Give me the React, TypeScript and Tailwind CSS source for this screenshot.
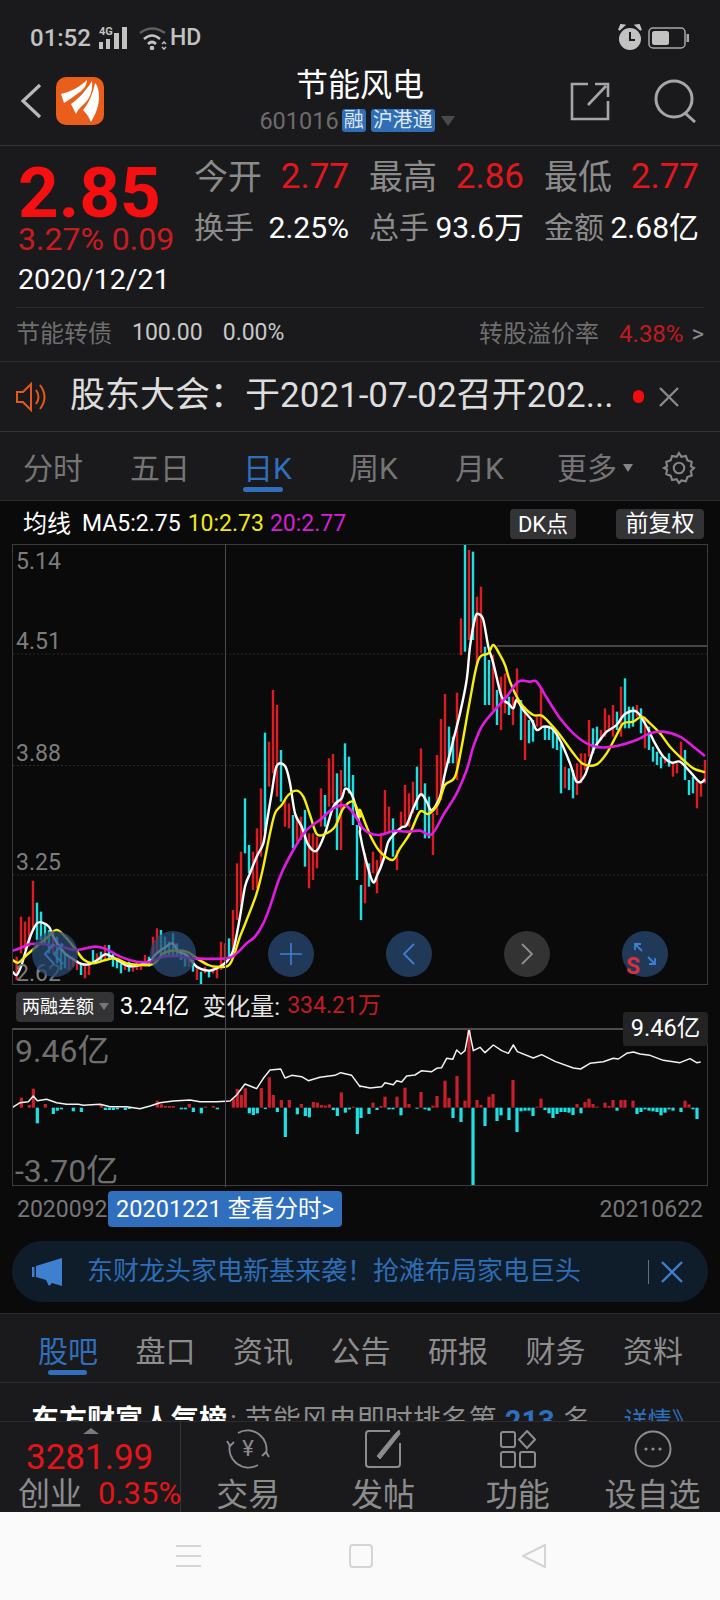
import type { ReactNode } from 'react';

const FONT = 'font-["Roboto","Noto_Sans_CJK_SC",sans-serif]';

// traced chart data, in 3x crop coordinates of the left and right half of the chart
const barsLeft =
  'r50 1250 1320|r63 1130 1240|r75 1145 1230|r87 1130 1220|r99 1022 1170|c111 1088 1200|c123 1115 1200|c135 1150 1210|c147 1170 1240|r159 1180 1240|c171 1190 1270|c183 1210 1290|c195 1240 1285|r207 1250 1290|r219 1250 1280|r231 1260 1290|c243 1270 1305|r255 1270 1315|r267 1270 1305|c279 1230 1270|r291 1240 1265|c303 1235 1265|r315 1215 1260|c327 1215 1260|c339 1240 1280|c351 1255 1285|c363 1270 1300|r375 1265 1290|c387 1265 1295|r399 1270 1295|r411 1265 1290|r423 1265 1290|r435 1245 1275|c447 1250 1280|r459 1190 1250|r471 1165 1240|c483 1170 1245|c495 1190 1250|c507 1205 1250|c519 1180 1250|c531 1210 1250|c543 1230 1260|c555 1240 1280|r567 1250 1280|c579 1260 1295|r591 1285 1320|c603 1295 1335|r615 1280 1300|c627 1290 1312|r639 1280 1300|r651 1280 1315|r663 1205 1290|r675 1210 1270|c687 1195 1260|r699 1110 1250|r711 970 1140|r723 935 1100|c735 775 940|c747 915 1000|r759 935 1050|r771 865 1045|r783 745 950|c795 578 880|r807 605 740|r819 450 700|r831 495 770|c843 630 785|r855 780 860|r867 790 865|c879 825 925|r891 830 905|r903 830 900|c915 810 980|r927 880 1045|r939 880 1020|r951 890 985|r963 745 860|c975 765 860|r987 655 800|r999 642 790|c1011 700 930|r1023 690 930|c1035 610 740|c1047 650 760|c1059 705 855|c1071 855 1020';
const barsRight =
  'c3 1035 1140|r15 940 1090|c27 970 1040|r39 935 1000|r51 960 1060|r63 880 980|r75 750 880|r87 800 880|c99 835 950|r111 930 990|r123 815 860|r135 735 860|r147 760 860|r159 725 820|c171 680 810|r183 625 770|c195 730 895|c207 770 895|r219 820 945|r231 645 825|r243 537 780|r255 462 700|c267 560 670|c279 590 670|r291 458 720|r303 235 345|c315 12 335|r327 30 300|c339 35 300|r351 170 370|r363 140 340|c375 320 495|c387 360 495|r399 345 510|c411 450 555|r423 410 570|r435 400 520|c447 470 525|r459 470 555|r471 385 490|c483 480 600|r495 500 660|c507 540 610|c519 540 605|r531 530 560|r543 440 560|c555 560 600|c567 560 600|c579 570 625|c591 580 630|c603 610 760|r615 680 745|c627 685 750|c639 690 775|r651 670 765|r663 640 730|r675 640 690|r687 540 650|c699 565 640|c711 560 625|r723 570 600|r735 505 590|r747 525 575|r759 495 590|c771 515 570|r783 440 590|c795 415 565|c807 500 565|c819 500 560|r831 495 530|c843 505 580|r855 530 625|c867 560 630|c879 620 665|c891 635 675|c903 650 685|r915 650 670|c927 640 680|r939 670 710|r951 670 700|r963 605 660|c975 630 720|c987 720 765|c999 710 760|r1011 725 805|r1023 730 770|r1035 660 730';

const whiteLine = [
  '38,1295 50,1305 63,1280 75,1240 87,1200 99,1170 111,1150 125,1147 147,1160 160,1190 175,1215 195,1240 220,1258 245,1272 270,1272 295,1258 315,1243 335,1250 360,1265 385,1278 420,1275 450,1262 470,1240 495,1222 518,1210 535,1235 560,1245 590,1280 625,1292 650,1285 680,1265 700,1230 720,1130 735,1040 750,1000 770,950 790,910 800,850 815,760 830,678 855,678 870,730 885,820 905,860 925,915 950,932 975,880 1000,800 1025,775 1037,745 1060,775 1080,860',
  '0,880 15,950 38,1025 52,1005 70,960 85,905 105,880 125,862 140,855 160,805 182,763 200,785 215,810 240,770 255,700 280,600 300,520 320,420 330,320 345,235 355,222 370,240 385,320 400,370 425,470 445,490 460,505 470,480 490,510 515,540 530,570 550,560 575,565 600,600 630,670 650,725 675,705 700,630 720,600 740,575 770,555 795,522 830,515 860,560 885,610 910,650 935,668 960,665 990,695 1020,727 1035,718',
];
const yellowLine = [
  '38,1260 55,1268 80,1245 115,1215 145,1190 170,1170 195,1190 225,1225 250,1258 280,1270 310,1262 345,1255 380,1270 420,1275 460,1272 490,1240 520,1232 560,1235 590,1255 625,1275 650,1280 690,1272 720,1190 740,1140 770,1060 790,980 810,880 825,820 845,795 865,765 890,752 910,770 930,825 950,882 975,882 1005,860 1030,805 1060,785 1080,830',
  '0,810 20,860 35,895 60,935 98,960 120,925 150,880 180,815 205,822 235,790 255,735 285,710 305,620 330,480 355,360 385,340 400,315 420,345 435,375 450,425 470,470 490,500 520,525 545,527 570,550 600,585 640,640 670,672 710,673 740,640 770,585 790,550 820,545 845,530 870,550 900,580 930,620 970,660 1000,685 1035,697',
];
const magentaLine = [
  '38,1232 60,1225 90,1212 120,1212 150,1215 190,1222 230,1230 285,1220 320,1228 360,1250 410,1265 450,1265 490,1250 530,1248 580,1255 680,1255 710,1240 740,1210 765,1190 790,1150 810,1100 840,1010 880,930 920,870 960,840 1000,805 1040,798 1080,850',
  '0,855 25,878 60,885 100,873 140,875 180,872 215,883 250,825 290,760 320,690 340,620 365,560 400,515 440,470 475,425 510,425 530,425 555,465 600,535 640,580 680,610 720,622 770,618 830,600 870,580 910,575 960,590 1000,620 1035,648',
];

const flowLeft =
  'r64 323|r88 345|r100 296|c112 400|r136 342|c160 372|c172 362|c184 358|c220 364|c244 366|r304 343|c316 360|c328 360|c340 360|c352 358|c376 360|c388 357|r472 332|r484 343|r496 348|r508 348|r520 348|c544 358|c556 358|r568 342|c580 366|c604 370|r616 350|r640 348|c652 358|r700 325|r712 297|r724 315|r736 295|c748 370|c760 375|c772 370|r784 294|c796 357|r808 262|r820 315|c832 366|r844 330|c856 441|r868 330|c892 373|r904 342|c916 378|c928 382|r940 336|r952 338|r964 345|r976 347|r988 343|c1000 360|c1012 378|r1024 307|c1036 368|c1048 358|r1060 350|c1072 432';
const flowRight =
  'c3 384|c27 372|r39 338|c51 360|r63 348|r75 320|c87 358|c99 358|r111 320|c123 376|r135 293|r147 342|c171 356|r183 306|c195 358|c207 362|r219 347|r231 318|r255 272|r267 324|c279 384|r291 258|c303 396|r315 332|r327 115|c339 585|r351 330|r363 345|c375 408|r387 320|r399 312|c411 393|c423 376|c447 390|r459 270|c471 426|c483 364|c495 362|c507 362|c519 378|r531 350|r543 326|c555 360|c567 370|c579 384|c591 372|c603 366|c615 366|c627 368|c639 375|r651 342|c663 370|r675 336|r687 326|r699 342|r711 350|r735 338|r747 348|r759 330|c771 362|r783 330|r795 330|r819 332|c831 372|c843 366|c855 358|c867 362|c879 364|c891 366|c903 376|c915 368|c927 358|c939 362|c963 366|r975 332|r987 343|c999 358|c1011 387';
const flowLine = [
  '38,352 60,338 85,335 100,318 112,332 140,328 170,338 200,343 235,343 250,346 300,343 330,350 380,350 420,356 450,348 480,338 520,333 570,330 600,335 650,335 690,333 710,315 735,282 770,296 790,265 810,240 842,237 855,264 875,256 905,260 925,272 960,262 1005,256 1022,248 1055,256 1080,290',
  '0,288 30,294 65,290 75,278 100,284 110,272 125,276 140,258 165,255 185,242 215,245 230,235 245,233 260,205 278,208 290,180 303,192 315,182 327,118 340,182 360,172 375,188 400,165 425,182 445,190 460,165 472,185 520,204 545,194 585,214 640,234 662,237 690,220 730,215 760,205 775,207 800,190 820,186 840,192 870,196 910,211 960,218 990,206 1010,218 1022,216',
];

const RED = '#dc1c22';
const CYAN = '#1fdfe3';

function parseBars(src: string, offset: number) {
  return src.split('|').map((b) => {
    const [x, a, c] = b.slice(1).split(' ').map(Number);
    return { color: b[0] === 'r' ? RED : CYAN, x: offset + x / 3, a, c };
  });
}

function linePoints(parts: string[]) {
  return parts.flatMap((part, i) =>
    part.split(' ').map((p) => {
      const [x, y] = p.split(',').map(Number);
      return [(i ? 360 : 0) + x / 3, y / 3];
    }),
  );
}

// catmull-rom through the traced points, so the averages read as curves
function smoothPath(parts: string[]) {
  const pts = linePoints(parts);
  let d = `M${pts[0][0]} ${pts[0][1]}`;
  for (let i = 0; i < pts.length - 1; i++) {
    const p0 = pts[Math.max(i - 1, 0)];
    const p1 = pts[i];
    const p2 = pts[i + 1];
    const p3 = pts[Math.min(i + 2, pts.length - 1)];
    const c1x = p1[0] + (p2[0] - p0[0]) / 6;
    const c1y = p1[1] + (p2[1] - p0[1]) / 6;
    const c2x = p2[0] - (p3[0] - p1[0]) / 6;
    const c2y = p2[1] - (p3[1] - p1[1]) / 6;
    d += `C${c1x} ${c1y} ${c2x} ${c2y} ${p2[0]} ${p2[1]}`;
  }
  return d;
}

function PriceChart() {
  const bars = [...parseBars(barsLeft, 0), ...parseBars(barsRight, 360)];
  return (
    <svg className="absolute inset-0 h-full w-full" viewBox="13 5 694 439">
      <line x1="13" x2="707" y1="114" y2="114" stroke="#2b2b2b" strokeDasharray="2 2" />
      <line x1="13" x2="707" y1="225.5" y2="225.5" stroke="#2b2b2b" strokeDasharray="2 2" />
      <line x1="13" x2="707" y1="335" y2="335" stroke="#2b2b2b" strokeDasharray="2 2" />
      <line x1="497" x2="707" y1="106" y2="106" stroke="#5a5a5a" strokeWidth="1.5" />
      {bars.map((b, i) => (
        <line key={i} x1={b.x} x2={b.x} y1={b.a / 3} y2={b.c / 3} stroke={b.color} strokeWidth="2.4" />
      ))}
      <path d={smoothPath(whiteLine)} fill="none" stroke="#ffffff" strokeWidth="2.4" strokeLinejoin="round" />
      <path d={smoothPath(yellowLine)} fill="none" stroke="#f6ef0e" strokeWidth="2.4" strokeLinejoin="round" />
      <path d={smoothPath(magentaLine)} fill="none" stroke="#e11be0" strokeWidth="2.6" strokeLinejoin="round" />
    </svg>
  );
}

function FlowChart() {
  const parse = (src: string, offset: number) =>
    src.split('|').map((b) => ({ red: b[0] === 'r', x: offset + Number(b.slice(1).split(' ')[0]) / 3, y: Number(b.split(' ')[1]) / 3 }));
  const bars = [...parse(flowLeft, 0), ...parse(flowRight, 360)];
  const zero = 353 / 3;
  const line = linePoints(flowLine).map((p) => p.join(',')).join(' ');
  return (
    <svg className="absolute inset-0 h-full w-full" viewBox="13 39 694 156">
      {bars.map((b, i) => (
        <rect
          key={i}
          x={b.x - 1.6}
          y={Math.min(b.y, zero)}
          width="3.2"
          height={Math.abs(b.y - zero)}
          fill={b.red ? '#c8202a' : CYAN}
        />
      ))}
      <polyline points={line} fill="none" stroke="#f2f2f2" strokeWidth="1.5" strokeLinejoin="round" />
    </svg>
  );
}

function Stat({ label, value, red, big }: { label: string; value: string; red?: boolean; big?: boolean }) {
  return (
    <div className="flex w-[175px] items-center justify-between pr-[20px]">
      <span className={`text-[#8b8b8b] ${big ? 'text-[34px]' : 'text-[30px]'}`}>{label}</span>
      <span className={`${big ? 'text-[35px]' : 'text-[30px]'} ${red ? 'text-[#e0181e]' : 'text-white'} whitespace-nowrap`}>{value}</span>
    </div>
  );
}

function Circle({ children, gray }: { children?: ReactNode; gray?: boolean }) {
  return (
    <div className={`flex h-[46px] w-[46px] items-center justify-center rounded-full ${gray ? 'bg-[#333333]' : 'bg-[#2a4a73]/75'}`}>
      {children}
    </div>
  );
}

function NavItem({ icon, label }: { icon: ReactNode; label: string }) {
  return (
    <div className="flex w-[135px] flex-col items-center pt-[6px]">
      <div className="flex h-[42px] items-center justify-center">{icon}</div>
      <span className="mt-[8px] text-[32px] leading-[34px] text-[#8c8c8c]">{label}</span>
    </div>
  );
}

export default function App() {
  return (
    <div className={`${FONT} h-[1600px] w-[720px] overflow-hidden bg-[#1a1a1c]`}>
      {/* status bar */}
      <div className="flex h-[58px] items-center justify-between pl-[30px] pr-[30px] pt-[18px] text-[#c2c2c2]">
        <div className="flex items-center">
          <span className="text-[24px] font-medium">01:52</span>
          <svg className="ml-[8px]" width="30" height="24" viewBox="0 0 30 24" fill="#c2c2c2">
            <text x="0" y="9" fontSize="11" fontWeight="700">4G</text>
            <rect x="0" y="16" width="4" height="7" />
            <rect x="7" y="13" width="4" height="10" />
            <rect x="15" y="7" width="5" height="16" />
            <rect x="23" y="1" width="5" height="22" />
          </svg>
          <svg className="ml-[10px]" width="28" height="24" viewBox="0 0 28 24" fill="none" stroke="#c2c2c2" strokeWidth="2.6">
            <path d="M1 7 Q13 -2 26 7" stroke="#5e5e5e" />
            <path d="M5 13 Q13 6 21 13" />
            <path d="M9 18 Q13 14 17 18" />
            <circle cx="13" cy="22" r="1" fill="#c2c2c2" />
            <path d="M23 18 L25 16 L27 18 M23 21 L25 23 L27 21" strokeWidth="1.5" />
          </svg>
          <span className="ml-[3px] text-[23px] font-medium">HD</span>
        </div>
        <div className="flex items-center gap-[5px]">
          <svg width="26" height="28" viewBox="0 0 26 28" fill="#c2c2c2">
            <circle cx="13" cy="15" r="11" />
            <path d="M2 6 L7 1.5 L4 1 Z M24 6 L19 1.5 L22 1 Z" stroke="#c2c2c2" strokeWidth="2" />
            <path d="M13 8 V16 H18" fill="none" stroke="#1a1a1c" strokeWidth="2" />
          </svg>
          <svg width="42" height="22" viewBox="0 0 42 22" fill="none">
            <rect x="1" y="1" width="36" height="20" rx="4" stroke="#a8a8a8" strokeWidth="1.5" />
            <rect x="4" y="4" width="17" height="14" rx="2.5" fill="#c2c2c2" />
            <rect x="38.500" y="7" width="2.500" height="8" fill="#a8a8a8" />
          </svg>
        </div>
      </div>

      {/* header */}
      <div className="flex h-[88px] items-center border-b border-[#333335] pb-[2px]">
        <div className="flex w-[200px] items-center pl-[20px]">
          <svg width="22" height="36" viewBox="0 0 22 36" fill="none" stroke="#b8b8b8" strokeWidth="3.2">
            <path d="M20 2 L3 18 L20 34" />
          </svg>
          <svg className="ml-[14px]" width="48" height="48" viewBox="0 0 48 48">
            <rect width="48" height="48" rx="10" fill="#e85e1a" />
            <path d="M5 17 C14 15 24 10 31 3 C31 9 26 14 21 17 C16 21 12 23 8 26 Z" fill="#ffffff" />
            <path d="M15 27 C22 22 30 14 36 4 C37 12 35 20 29 26 C26 29 22 32 20 37 Z" fill="#ffffff" />
            <path d="M27 33 C33 26 37 16 39 6 C42 9 43 14 43 20 C43 30 39 38 35 45 C33 40 30 36 27 33 Z" fill="#ffffff" />
          </svg>
        </div>
        <div className="flex flex-1 flex-col items-center">
          <span className="-mt-[3px] text-[32px] leading-[38px] text-white">节能风电</span>
          <div className="mr-[6px] mt-[5px] flex items-center">
            <span className="text-[23.5px] leading-[24px] text-[#6c6c6c]">601016</span>
            <span className="ml-[3px] rounded-[3px] bg-[#2f6db5] px-[2px] text-[20px] leading-[23px] text-[#dfe8f2]">融</span>
            <span className="ml-[5px] rounded-[3px] bg-[#2f6db5] px-[2px] text-[20px] leading-[23px] text-[#dfe8f2]">沪港通</span>
            <span className="ml-[6px] h-0 w-0 border-x-[7px] border-t-[10px] border-x-transparent border-t-[#4a4a4a]" />
          </div>
        </div>
        <div className="flex w-[200px] items-center justify-end gap-[44px] pr-[24px]">
          <svg width="40" height="40" viewBox="0 0 40 40" fill="none" stroke="#a6a6a6" strokeWidth="2.6">
            <path d="M18 3 H2 V38 H38 V20" />
            <path d="M18 24 L36 5 M25 3 H38 V16" />
          </svg>
          <svg width="42" height="44" viewBox="0 0 42 44" fill="none" stroke="#a6a6a6" strokeWidth="3">
            <circle cx="20" cy="20" r="18" />
            <path d="M31 34 L41 43" />
          </svg>
        </div>
      </div>

      {/* quote */}
      <div className="h-[161px]">
        <div className="flex">
          <div className="w-[194px] pl-[18px]">
            <div className="-mb-[2px] pt-[16px] text-[71px] font-bold leading-[62px] text-[#f50f10]">2.85</div>
            <div className="whitespace-nowrap text-[32px] leading-[34px] text-[#c91c22]">3.27% 0.09</div>
            <div className="mt-[6px] text-[28.5px] leading-[36px] text-white">2020/12/21</div>
          </div>
          <div className="pt-[8px]">
            <div className="flex h-[46px] items-center">
              <Stat big label="今开" value="2.77" red />
              <Stat big label="最高" value="2.86" red />
              <Stat big label="最低" value="2.77" red />
            </div>
            <div className="mt-[4px] flex h-[46px] items-center">
              <Stat label="换手" value="2.25%" />
              <Stat label="总手" value="93.6万" />
              <Stat label="金额" value="2.68亿" />
            </div>
          </div>
        </div>
      </div>
      <div className="mx-[16px] h-px bg-[#2a2a2c]" />

      {/* convertible bond */}
      <div className="flex h-[54px] items-center justify-between border-b border-[#2c2c2e] pb-[2px] pl-[16px] pr-[16px] text-[24px] text-[#6f6f6f]">
        <div className="flex items-center">
          <span>节能转债</span>
          <span className="ml-[20px] text-[23px] text-[#c8c8c8]">100.00</span>
          <span className="ml-[20px] text-[23px] text-[#c8c8c8]">0.00%</span>
        </div>
        <div className="flex items-center">
          <span>转股溢价率</span>
          <span className="ml-[20px] text-[24px] text-[#c01a20]">4.38%</span>
          <span className="ml-[8px] text-[#8a8a8a]">&gt;</span>
        </div>
      </div>

      {/* notice */}
      <div className="flex h-[70px] items-center border-b border-[#333335] pl-[16px]">
        <svg width="34" height="30" viewBox="0 0 34 30" fill="none" stroke="#e05a1c" strokeWidth="2">
          <path d="M1 10 H7 L15 2 V28 L7 20 H1 Z" />
          <path d="M20 8 Q25 15 20 22" />
          <path d="M24 3 Q33 15 24 27" />
        </svg>
        <span className="ml-[20px] whitespace-nowrap text-[35px] text-[#dedede]">股东大会：于2021-07-02召开202...</span>
        <span className="ml-[20px] h-[13px] w-[11px] rounded-full bg-[#f20c10]" />
        <svg className="ml-[15px]" width="20" height="20" viewBox="0 0 20 20" stroke="#8a8a8a" strokeWidth="2.4">
          <path d="M1 1 L19 19 M19 1 L1 19" />
        </svg>
      </div>

      {/* period tabs */}
      <div className="flex h-[69px] items-center border-b border-[#2c2c2e] pt-[4px] text-[30px] text-[#757575]">
        <span className="ml-[23px] w-[107px]">分时</span>
        <span className="w-[113px]">五日</span>
        <div className="relative w-[106px] text-[#2f6fbe]">
          日K
          <span className="absolute left-0 top-[41px] h-[5px] w-[40px] rounded-full bg-[#2f6fbe]" />
        </div>
        <span className="w-[106px]">周K</span>
        <span className="w-[102px]">月K</span>
        <span>更多</span>
        <span className="ml-[6px] h-0 w-0 border-x-[5px] border-t-[8px] border-x-transparent border-t-[#858585]" />
        <svg className="ml-[28px]" width="36" height="38" viewBox="0 0 24 24" fill="none" stroke="#858585" strokeWidth="1.4">
          <path d="M12 2 l1.6 2.6 3-.6 1 2.9 2.9 1-.6 3 2.1 1.1-2.1 2 .6 3-2.9 1-1 2.9-3-.6L12 22l-1.600-2.600-3 .6-1-2.900-2.900-1 .6-3L2 12l2.100-1.100-.6-3 2.900-1 1-2.900 3 .6z" />
          <circle cx="12" cy="12" r="3.5" />
        </svg>
      </div>

      {/* chart area */}
      <div className="relative h-[812px] bg-[#0a0a0b]">
        <div className="absolute bottom-[126px] left-[225px] top-[43px] z-10 w-px bg-[#4a4a4a]" />

        <div className="flex h-[43px] items-center pr-[16px] pt-[3px] text-[23px]">
          <span className="ml-[23px] text-[24px] text-white">均线</span>
          <span className="ml-[11px] text-white">MA5:2.75</span>
          <span className="ml-[7px] text-[#efe81a]">10:2.73</span>
          <span className="ml-[6px] text-[#d61fd4]">20:2.77</span>
          <span className="ml-auto flex h-[30px] w-[66px] items-center justify-center rounded-[4px] bg-[#333335] text-[22px] text-white">DK点</span>
          <span className="ml-[40px] flex h-[30px] w-[88px] items-center justify-center rounded-[4px] bg-[#333335] text-[23px] text-white">前复权</span>
        </div>

        <div className="relative ml-[12px] h-[441px] w-[696px] border border-[#3c3c3e]">
          <PriceChart />
          <div className="absolute inset-y-0 left-[3px] flex flex-col text-[23px] text-[#7d7d7d]">
            <span className="mt-[2px] leading-[30px]">5.14</span>
            <span className="mt-[50px] leading-[30px]">4.51</span>
            <span className="mt-[82px] leading-[30px]">3.88</span>
            <span className="mt-[79px] leading-[30px]">3.25</span>
            <span className="mt-[81px] leading-[30px]">2.62</span>
          </div>
          <div className="absolute bottom-[7px] left-[19px] flex gap-[72px]">
            <Circle>
              <svg width="26" height="24" viewBox="0 0 26 24" fill="none" stroke="#3b6ca8" strokeWidth="2">
                <path d="M12 2 L3 12 L12 22 M21 2 L12 12 L21 22" />
              </svg>
            </Circle>
            <Circle />
            <Circle>
              <svg width="24" height="24" viewBox="0 0 24 24" stroke="#3f7fcf" strokeWidth="1.6">
                <path d="M12 1 V23 M1 12 H23" />
              </svg>
            </Circle>
            <Circle>
              <svg width="14" height="24" viewBox="0 0 14 24" fill="none" stroke="#3f7fcf" strokeWidth="1.8">
                <path d="M12 2 L2 12 L12 22" />
              </svg>
            </Circle>
            <Circle gray>
              <svg width="14" height="24" viewBox="0 0 14 24" fill="none" stroke="#8f8f8f" strokeWidth="1.8">
                <path d="M2 2 L12 12 L2 22" />
              </svg>
            </Circle>
            <div className="relative">
              <Circle>
                <svg width="24" height="24" viewBox="0 0 24 24" fill="none" stroke="#3f7fcf" strokeWidth="1.8">
                  <path d="M2 8 V2 H8 M2 2 L9 9 M22 16 V22 H16 M22 22 L15 15" />
                </svg>
              </Circle>
              <span className="absolute bottom-[-3px] left-[4px] text-[23px] font-bold leading-[26px] text-[#d8303c]">S</span>
            </div>
          </div>
        </div>

        <div className="flex h-[43px] items-center text-[23px]">
          <div className="ml-[16px] flex h-[30px] w-[98px] items-center rounded-[4px] bg-[#333335] pl-[6px] text-[18px] text-white">
            两融差额
            <span className="ml-[5px] h-0 w-0 border-x-[5px] border-t-[7px] border-x-transparent border-t-[#777777]" />
          </div>
          <span className="ml-[6px] text-[23.5px] text-white">3.24亿</span>
          <span className="ml-[13px] text-[24px] text-[#e4e4e4]">变化量:</span>
          <span className="ml-[7px] text-[#c01c22]">334.21万</span>
        </div>

        <div className="relative ml-[12px] h-[158px] w-[696px] border border-[#3c3c3e]">
          <FlowChart />
          <div className="absolute inset-x-0 top-[-1px] h-[2px] bg-[#4c4c4c]" />
          <span className="absolute left-[2px] top-[2px] text-[32px] leading-[40px] text-[#6f6f6f]">9.46亿</span>
          <span className="absolute bottom-[-6px] left-[2px] text-[32px] leading-[40px] text-[#6f6f6f]">-3.70亿</span>
          <span className="absolute right-[-1px] top-[-17px] flex h-[34px] w-[85px] items-center justify-center rounded-[3px] bg-[#232325] text-[23.5px] text-white">9.46亿</span>
        </div>

        <div className="flex h-[46px] items-start">
          <span className="ml-[17px] mt-[9px] w-[91px] overflow-hidden text-[23px] leading-[30px] text-[#767676]">2020092</span>
          <span className="mt-[5px] flex h-[36px] w-[234px] items-center justify-center rounded-[4px] bg-[#2f6fbe] pt-[1px] text-[23.5px] text-white">20201221 查看分时&gt;</span>
          <span className="ml-auto mr-[17px] mt-[9px] text-[23px] leading-[30px] text-[#767676]">20210622</span>
        </div>

        <div className="mx-[12px] mt-[9px] flex h-[61px] items-center rounded-full bg-[#0f1d2b] pl-[20px] pr-[24px]">
          <svg width="32" height="28" viewBox="0 0 32 28" fill="#3f7fcf">
            <rect x="0" y="9" width="2.500" height="10" />
            <path d="M4 8 L30 0 V28 L20 25 L17 28 L14 22 L4 19 Z" />
          </svg>
          <span className="ml-[23px] text-[26px] text-[#2e6cb4]">东财龙头家电新基来袭！抢滩布局家电巨头</span>
          <span className="ml-auto h-[24px] w-px bg-[#5a7389]" />
          <svg className="ml-[11px]" width="24" height="24" viewBox="0 0 24 24" stroke="#3f7fcf" strokeWidth="2.4">
            <path d="M2 2 L22 22 M22 2 L2 22" />
          </svg>
        </div>
      </div>

      {/* info tabs */}
      <div className="flex h-[70px] items-center justify-between border-y border-[#2c2c2e] pl-[38px] pr-[37px] pt-[6px] text-[30px] text-[#8d8d8d]">
        <div className="relative text-[#2f6fbe]">
          股吧
          <span className="absolute left-[10px] top-[41px] h-[5px] w-[39px] rounded-full bg-[#2f6fbe]" />
        </div>
        <span>盘口</span>
        <span>资讯</span>
        <span>公告</span>
        <span>研报</span>
        <span>财务</span>
        <span>资料</span>
      </div>

      {/* rank row, cut off by the bottom bar */}
      <div className="h-[38px] overflow-hidden pl-[31px] pt-[20px]">
        <div className="flex items-center whitespace-nowrap text-[28px] leading-[36px] text-[#8d8d8d]">
          <span className="font-bold text-white">东方财富人气榜</span>
          <span className="ml-[3px]">:</span>
          <span className="ml-[8px]">节能风电即时排名第</span>
          <span className="ml-[8px] text-[29px] font-bold text-[#2f6fbe]">213</span>
          <span className="ml-[8px]">名</span>
          <span className="ml-[33px] text-[24px] text-[#2f6fbe]">详情》</span>
        </div>
      </div>

      {/* bottom bar */}
      <div className="flex h-[91px] border-t border-[#2c2c2e]">
        <div className="flex w-[181px] flex-col border-r border-[#333335] pl-[18px]">
          <span className="ml-[65px] mt-[6px] h-0 w-0 border-x-[8px] border-b-[6px] border-x-transparent border-b-[#7a7a7a]" />
          <span className="ml-[8px] mt-[4px] text-[35px] leading-[40px] text-[#e3141a]">3281.99</span>
          <div className="-mt-[2px] flex items-center whitespace-nowrap leading-[36px]">
            <span className="text-[32px] text-[#8c8c8c]">创业</span>
            <span className="ml-[16px] text-[31px] text-[#e3141a]">0.35%</span>
          </div>
        </div>
        <NavItem
          label="交易"
          icon={
            <svg width="44" height="42" viewBox="0 0 44 42" fill="none" stroke="#8c8c8c" strokeWidth="1.800">
              <path d="M12 5 A19 19 0 0 1 40 26" />
              <path d="M32 37 A19 19 0 0 1 4 16" />
              <path d="M1 13 L4 18 L8 14 M43 29 L40 24 L36 28" />
              <text x="22" y="28" fontSize="22" textAnchor="middle" fill="#8c8c8c" stroke="none">¥</text>
            </svg>
          }
        />
        <NavItem
          label="发帖"
          icon={
            <svg width="38" height="40" viewBox="0 0 38 40" fill="none" stroke="#8c8c8c" strokeWidth="2">
              <path d="M26 2 H5 Q2 2 2 5 V35 Q2 38 5 38 H33 Q36 38 36 35 V14" />
              <path d="M13 27 L31 5 L35 1 L36 5 L16 30 Z" fill="#8c8c8c" strokeWidth="1" />
            </svg>
          }
        />
        <NavItem
          label="功能"
          icon={
            <svg width="36" height="38" viewBox="0 0 36 38" fill="none" stroke="#8c8c8c" strokeWidth="2">
              <rect x="1" y="2" width="14" height="15" rx="2" />
              <rect x="1" y="22" width="14" height="15" rx="2" />
              <rect x="20" y="22" width="15" height="15" rx="2" />
              <path d="M27 1 L35 9.500 L27 18 L19 9.500 Z" />
            </svg>
          }
        />
        <NavItem
          label="设自选"
          icon={
            <svg width="38" height="38" viewBox="0 0 38 38" fill="#8c8c8c">
              <circle cx="19" cy="19" r="17.500" fill="none" stroke="#8c8c8c" strokeWidth="2" />
              <circle cx="12" cy="19" r="1.600" />
              <circle cx="19" cy="19" r="1.600" />
              <circle cx="26" cy="19" r="1.600" />
            </svg>
          }
        />
      </div>

      {/* android nav bar */}
      <div className="flex h-[88px] items-center justify-center gap-[148px] bg-[#fafafa] pl-[2px]">
        <div className="flex h-[22px] w-[25px] flex-col justify-between">
          <span className="h-[2px] bg-[#d4d4d4]" />
          <span className="h-[2px] bg-[#d4d4d4]" />
          <span className="h-[2px] bg-[#d4d4d4]" />
        </div>
        <div className="h-[24px] w-[24px] rounded-[4px] border-2 border-[#d4d4d4]" />
        <svg width="26" height="26" viewBox="0 0 26 26" fill="none" stroke="#d4d4d4" strokeWidth="2">
          <path d="M24 2 V24 L2 13 Z" strokeLinejoin="round" />
        </svg>
      </div>
    </div>
  );
}
